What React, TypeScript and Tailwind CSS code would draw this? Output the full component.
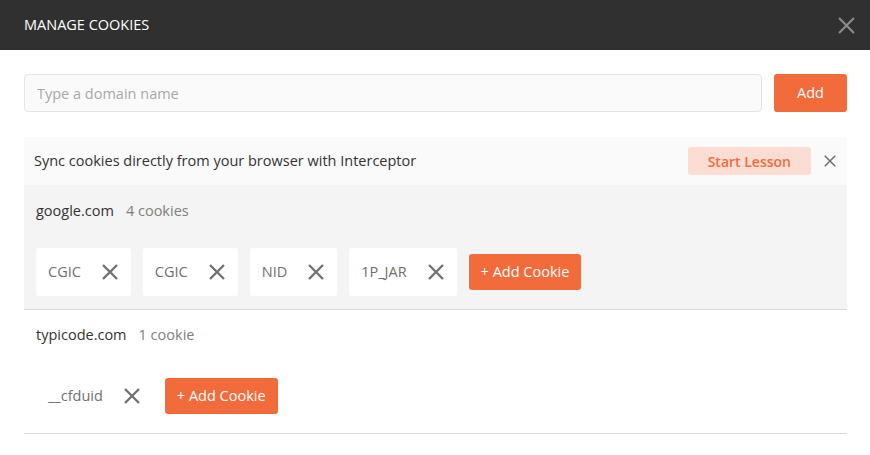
type Domain = {
  name: string;
  count: string;
  cookies: string[];
  shaded: boolean;
};

const domains: Domain[] = [
  { name: "google.com", count: "4 cookies", cookies: ["CGIC", "CGIC", "NID", "1P_JAR"], shaded: true },
  { name: "typicode.com", count: "1 cookie", cookies: ["__cfduid"], shaded: false },
];

// plain cross, lucide's X is too thin at this size
const Cross = ({ size, stroke, className }: { size: number; stroke: number; className: string }) => (
  <svg width={size} height={size} viewBox="0 0 16 16" className={className}>
    <path d="M1 1L15 15M15 1L1 15" stroke="currentColor" strokeWidth={stroke} strokeLinecap="butt" fill="none" />
  </svg>
);

const CookieChip = ({ name }: { name: string }) => (
  <div className="flex h-12 items-center rounded-[3px] bg-white pl-3 pr-[13px]">
    <span className="text-[14.5px] text-[#707070]">{name}</span>
    <Cross size={16} stroke={2.3} className="ml-[21px] text-[#707070]" />
  </div>
);

const DomainGroup = ({ domain }: { domain: Domain }) => (
  <div
    className={`border-b border-[#d9d9d9] px-3 ${
      domain.shaded ? "bg-[#f4f4f4] pt-4 pb-[13px]" : "bg-white pt-[15px] pb-[13px]"
    }`}
  >
    <div className="flex h-5 items-center gap-3 text-[14.5px]">
      <span className="text-[#333]">{domain.name}</span>
      <span className="text-[#808080]">{domain.count}</span>
    </div>
    <div className="mt-[27px] flex items-center gap-3">
      {domain.cookies.map((c, i) => (
        <CookieChip key={i} name={c} />
      ))}
      <button className="h-9 rounded-[3px] bg-[#f26b3a] px-[12px] text-[14.5px] text-white">
        + Add Cookie
      </button>
    </div>
  </div>
);

export default function App() {
  return (
    <div
      className="h-[455px] w-[870px] bg-white"
      style={{ fontFamily: '"Open Sans", "Noto Sans", sans-serif' }}
    >
      <div className="flex h-[50px] items-center justify-between bg-[#303030] pl-6 pr-[15px]">
        <span className="text-[14.5px] text-white">MANAGE COOKIES</span>
        <Cross size={17} stroke={2} className="text-[#8c8c8c]" />
      </div>

      <div className="pl-6 pr-[23px]">
        <div className="mt-6 flex gap-3">
          <input
            placeholder="Type a domain name"
            className="h-[38px] flex-1 rounded-[4px] border border-[#e3e3e3] bg-[#fafafa] px-3 text-[14.5px] outline-none placeholder:text-[#a8a8a8]"
          />
          <button className="h-[38px] w-[73px] rounded-[3px] bg-[#f26b3a] text-[14.5px] text-white">
            Add
          </button>
        </div>

        <div className="mt-[25px] flex h-12 items-center bg-[#fafafa] pl-[10px] pr-[11px]">
          <span className="flex-1 text-[14.5px] text-[#333]">
            Sync cookies directly from your browser with Interceptor
          </span>
          <button className="h-7 rounded-[3px] bg-[#fbddd3] px-[20px] text-[14px] font-semibold text-[#f26b3a]">
            Start Lesson
          </button>
          <Cross size={12} stroke={2} className="ml-[13px] text-[#6e6e6e]" />
        </div>

        {domains.map((d) => (
          <DomainGroup key={d.name} domain={d} />
        ))}
      </div>
    </div>
  );
}
